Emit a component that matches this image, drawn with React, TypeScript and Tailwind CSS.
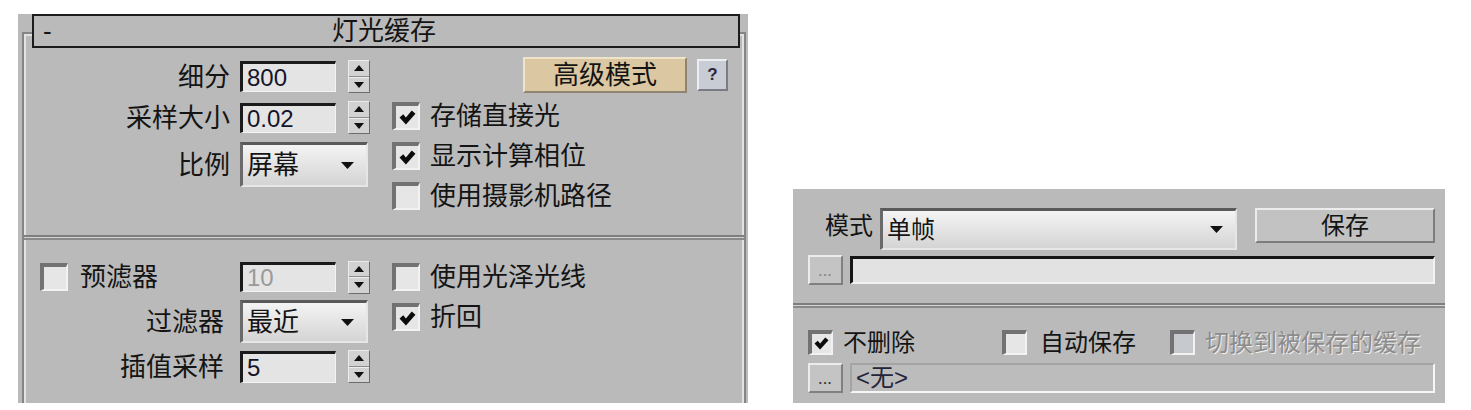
import React from "react";

const CJK = "font-['Liberation_Sans','Noto_Sans_CJK_SC',sans-serif]";

function CheckMark({ size = 16 }: { size?: number }) {
  return (
    <svg width={size} height={size} viewBox="0 0 16 16">
      <path d="M0.5 8 L4 5 L6.5 8 L12 1.5 L15.5 4.5 L6.5 14.5 Z" fill="#0a0a0a" />
    </svg>
  );
}

function Checkbox({ checked = false, big = true, disabled = false }: { checked?: boolean; big?: boolean; disabled?: boolean }) {
  return (
    <div
      className={
        (big ? "w-[28px] h-[28px] border-t-[4px] border-l-[4px] " : "w-[25px] h-[25px] border-t-[4px] border-l-[4px] ") +
        (disabled ? "bg-[#c6c9cd] " : "bg-[#e6e6e6] ") +
        "border-t-[#727272] border-l-[#727272] border-b-2 border-r-2 border-b-[#f2f2f2] border-r-[#f2f2f2] flex items-center justify-center shrink-0"
      }
    >
      {checked && <CheckMark size={big ? 17 : 15} />}
    </div>
  );
}

function Spinner() {
  return (
    <div className="w-[22px] h-[33px] flex flex-col bg-[#d2d2d2] border border-t-[#ececec] border-l-[#ececec] border-b-[#6c6c6c] border-r-[#6c6c6c] shrink-0">
      <div className="flex-1 flex items-center justify-center border-b border-b-[#8c8c8c]">
        <svg width="10" height="6" viewBox="0 0 10 6">
          <path d="M0 6 L5 0 L10 6Z" fill="#111" />
        </svg>
      </div>
      <div className="flex-1 flex items-center justify-center border-t border-t-[#ededed]">
        <svg width="10" height="6" viewBox="0 0 10 6">
          <path d="M0 0 L5 6 L10 0Z" fill="#111" />
        </svg>
      </div>
    </div>
  );
}

function NumInput({ value, disabled = false, h = "h-[31px]" }: { value: string; disabled?: boolean; h?: string }) {
  return (
    <div
      className={
        "w-[96px] " +
        h +
        " bg-[#e4e4e4] border-t-[3px] border-l-[3px] border-t-[#1b1b1b] border-l-[#1b1b1b] border-b border-r border-b-[#f4f4f4] border-r-[#f4f4f4] flex items-center pl-[4px] text-[24px] leading-none font-['Liberation_Sans',sans-serif] shrink-0 " +
        (disabled ? "text-[#9a9a9a]" : "text-[#14142a]")
      }
    >
      {value}
    </div>
  );
}

function Dropdown({ value, w, h, size = "text-[26px]" }: { value: string; w: string; h: string; size?: string }) {
  return (
    <div
      className={
        w +
        " " +
        h +
        " bg-gradient-to-b from-[#f4f4f4] to-[#d4d4d4] border-t-[3px] border-l-[3px] border-t-[#5a5a5a] border-l-[#6a6a6a] border-b-2 border-r-2 border-b-[#e6e6e6] border-r-[#e6e6e6] flex items-center justify-between pl-[4px] pr-[12px] shrink-0 " +
        size
      }
    >
      <span className="leading-none">{value}</span>
      <svg width="13" height="7" viewBox="0 0 13 7">
        <path d="M0 0 L13 0 L6.5 7Z" fill="#111" />
      </svg>
    </div>
  );
}

function Separator() {
  return <div className="h-[5px] border-t-2 border-b-2 border-t-[#7e7e7e] border-b-[#8a8a8a] bg-[#d2d2d2]" />;
}

function LeftPanel() {
  return (
    <div className="ml-[18px] mt-[14px] w-[730px] h-[389px] bg-[#bababa] flex flex-col text-[26px] text-[#141414]">
      <div className="mt-[18px] ml-[4px] mr-[2px] flex-1 flex flex-col border-t-2 border-l-2 border-r-2 border-[#858585] shadow-[inset_2px_2px_0_#e2e2e2,inset_-2px_0_0_#e2e2e2]">
        <div className="-mt-[20px] ml-[8px] mr-[4px] h-[34px] border-2 border-[#1c1c1c] bg-[#bababa] flex items-center">
          <span className="pl-[9px] w-[40px] leading-none">-</span>
          <span className="flex-1 text-center leading-none pr-[44px]">灯光缓存</span>
        </div>

        <div className="h-[187px] flex pt-[9px]">
          <div className="flex flex-col pt-[3px]">
            <div className="flex items-center h-[33px]">
              <span className="w-[206px] text-right leading-none">细分</span>
              <div className="ml-[10px]"><NumInput value="800" /></div>
              <div className="ml-[12px]"><Spinner /></div>
            </div>
            <div className="flex items-center h-[33px] mt-[8px]">
              <span className="w-[206px] text-right leading-none">采样大小</span>
              <div className="ml-[10px]"><NumInput value="0.02" h="h-[30px]" /></div>
              <div className="ml-[12px]"><Spinner /></div>
            </div>
            <div className="flex items-center h-[45px] mt-[8px]">
              <span className="w-[206px] text-right leading-none">比例</span>
              <div className="ml-[10px]"><Dropdown value="屏幕" w="w-[128px]" h="h-[45px]" /></div>
            </div>
          </div>
          <div className="ml-[22px] w-[336px] flex flex-col">
            <div className="flex items-center justify-end h-[36px]">
              <div className="w-[164px] h-[36px] bg-[#dbc7a1] border-2 border-t-[#efe3c9] border-l-[#efe3c9] border-b-[#8f8470] border-r-[#8f8470] flex items-center justify-center leading-none">
                高级模式
              </div>
              <div className="ml-[10px] w-[31px] h-[32px] bg-[#c8ccd4] border-2 border-t-[#eceef2] border-l-[#eceef2] border-b-[#7a7c82] border-r-[#7a7c82] flex items-center justify-center text-[17px] font-bold font-['Liberation_Sans',sans-serif] text-[#2a2a3a]">
                ?
              </div>
            </div>
            <div className="flex items-center mt-[9px] h-[28px]">
              <Checkbox checked />
              <span className="ml-[10px] leading-none">存储直接光</span>
            </div>
            <div className="flex items-center mt-[12px] h-[28px]">
              <Checkbox checked />
              <span className="ml-[10px] leading-none">显示计算相位</span>
            </div>
            <div className="flex items-center mt-[12px] h-[28px]">
              <Checkbox />
              <span className="ml-[10px] leading-none">使用摄影机路径</span>
            </div>
          </div>
        </div>

        <Separator />

        <div className="flex pt-[22px]">
          <div className="flex flex-col">
            <div className="flex items-center h-[30px]">
              <div className="w-[216px] flex items-center pl-[16px]">
                <Checkbox />
                <span className="ml-[12px] leading-none">预滤器</span>
              </div>
              <NumInput value="10" disabled h="h-[30px]" />
              <div className="ml-[12px]"><Spinner /></div>
            </div>
            <div className="flex items-center h-[43px] mt-[8px]">
              <span className="w-[216px] text-right pr-[16px] leading-none">过滤器</span>
              <Dropdown value="最近" w="w-[128px]" h="h-[43px]" />
            </div>
            <div className="flex items-center h-[33px] mt-[7px]">
              <span className="w-[216px] text-right pr-[16px] leading-none">插值采样</span>
              <NumInput value="5" h="h-[32px]" />
              <div className="ml-[12px]"><Spinner /></div>
            </div>
          </div>
          <div className="ml-[22px] flex flex-col">
            <div className="flex items-center h-[28px] mt-[1px]">
              <Checkbox />
              <span className="ml-[10px] leading-none">使用光泽光线</span>
            </div>
            <div className="flex items-center h-[28px] mt-[12px]">
              <Checkbox checked />
              <span className="ml-[10px] leading-none">折回</span>
            </div>
          </div>
        </div>
      </div>
    </div>
  );
}

function DotsButton({ faded = false }: { faded?: boolean }) {
  return (
    <div className="w-[35px] h-[30px] bg-[#c4c4c4] border-2 border-t-[#ececec] border-l-[#ececec] border-b-[#808080] border-r-[#808080] flex items-end justify-center pb-[5px] shrink-0">
      <span className={"text-[13px] leading-none tracking-[1px] font-['Liberation_Sans',sans-serif] font-bold " + (faded ? "text-[#8a8a8a]" : "text-[#3a3a3a]")}>...</span>
    </div>
  );
}

function RightPanel() {
  return (
    <div className="ml-[45px] mt-[189px] w-[652px] h-[214px] bg-[#bababa] flex flex-col text-[24px] text-[#141414]">
      <div className="flex items-start pt-[19px]">
        <span className="pl-[32px] w-[87px] h-[36px] flex items-center leading-none">模式</span>
        <Dropdown value="单帧" w="w-[357px]" h="h-[42px]" size="text-[24px]" />
        <div className="ml-[18px] w-[180px] h-[35px] bg-[#c2c2c2] border-2 border-t-[#ececec] border-l-[#ececec] border-b-[#7c7c7c] border-r-[#7c7c7c] flex items-center justify-center leading-none">
          保存
        </div>
      </div>
      <div className="flex items-center mt-[5px] pl-[15px]">
        <DotsButton faded />
        <div className="ml-[7px] w-[585px] h-[28px] bg-[#e2e2e2] border-t-[3px] border-l-[3px] border-t-[#151515] border-l-[#151515] border-b-2 border-r-2 border-b-[#f2f2f2] border-r-[#f2f2f2]" />
      </div>
      <div className="mt-[18px]">
        <Separator />
      </div>
      <div className="flex items-center mt-[22px] pl-[15px] h-[25px]">
        <Checkbox checked big={false} />
        <span className="ml-[10px] leading-none w-[159px]">不删除</span>
        <Checkbox big={false} />
        <span className="ml-[13px] leading-none w-[130px]">自动保存</span>
        <Checkbox big={false} disabled />
        <span className="ml-[10px] leading-none text-[#8c8c8c] [text-shadow:1px_1px_0_#ededed]">切换到被保存的缓存</span>
      </div>
      <div className="flex items-center mt-[8px] pl-[15px]">
        <DotsButton />
        <div className="ml-[7px] w-[585px] h-[30px] bg-[#bcbcbc] border-t-2 border-l-2 border-t-[#a4a4a4] border-l-[#a4a4a4] border-b-2 border-r-2 border-b-[#f6f6f6] border-r-[#f6f6f6] flex items-center pl-[4px]">
          <span className="leading-none text-[#24243a]">&lt;无&gt;</span>
        </div>
      </div>
    </div>
  );
}

export default function App() {
  return (
    <div className={"w-[1471px] h-[410px] bg-white flex items-start overflow-hidden " + CJK}>
      <LeftPanel />
      <RightPanel />
    </div>
  );
}
